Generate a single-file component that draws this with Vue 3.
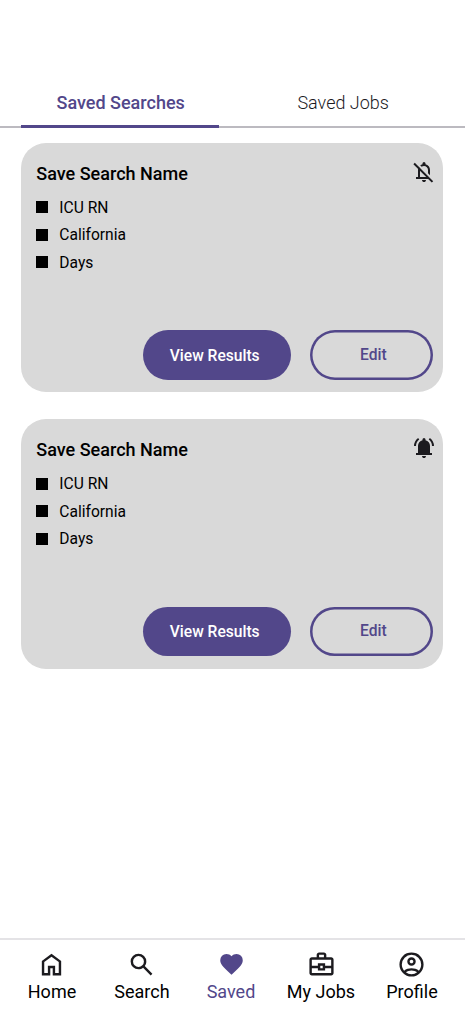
<script setup>
const searches = [
  { id: 1, name: 'Save Search Name', criteria: ['ICU RN', 'California', 'Days'], alerts: false },
  { id: 2, name: 'Save Search Name', criteria: ['ICU RN', 'California', 'Days'], alerts: true },
]

const bellOff =
  'M160-200v-80h80v-280q0-33 8.5-65t25.5-61l60 60q-7 16-10.5 32.5T320-560v280h248L56-792l56-56 736 736-56 56-146-144H160Zm560-154-80-80v-126q0-66-47-113t-113-47q-26 0-50 8t-44 24l-58-58q20-16 43-28t49-18v-28q0-25 17.5-42.5T480-880q25 0 42.5 17.5T540-820v28q80 20 130 84.5T720-560v206ZM480-80q-33 0-56.5-23.5T400-160h160q0 33-23.5 56.5T480-80Z'
const bellActive =
  'M160-200v-80h80v-280q0-83 50-147.5T420-792v-28q0-25 17.5-42.5T480-880t42.5 17.5T540-820v28q80 20 130 84.5T720-560v280h80v80H160Zm320 120q-33 0-56.5-23.5T400-160h160q0 33-23.5 56.5T480-80ZM80-560q0-100 44.5-183.5T244-882l47 64q-60 44-95.5 111T160-560H80Zm720 0q0-80-35.5-147T669-818l47-64q75 55 119.5 138.5T880-560h-80Z'

const nav = [
  { label: 'Home', cls: 'home', path: 'M240-200h120v-240h240v240h120v-360L480-740 240-560v360Zm-80 80v-480l320-240 320 240v480H520v-240h-80v240H160Z' },
  { label: 'Search', cls: 'search', path: 'M784-120 532-372q-30 24-69 38t-83 14q-109 0-184.5-75.5T120-580q0-109 75.5-184.5T380-840q109 0 184.5 75.5T640-580q0 44-14 83t-38 69l252 252-56 56ZM380-400q75 0 127.5-52.5T560-580q0-75-52.5-127.5T380-760q-75 0-127.5 52.5T200-580q0 75 52.5 127.5T380-400Z' },
  { label: 'Saved', cls: 'saved', path: 'm480-120-58-52q-101-91-167-157T150-447.5Q111-500 95.5-544T80-634q0-94 63-157t157-63q52 0 99 22t81 62q34-40 81-62t99-22q94 0 157 63t63 157q0 46-15.500 90T810-447.500Q771-395 705-329T538-172l-58 52Z' },
  { label: 'My Jobs', cls: 'jobs', path: 'M160-120q-33 0-56.5-23.5T80-200v-440q0-33 23.5-56.5T160-720h160v-80q0-33 23.5-56.5T400-880h160q33 0 56.5 23.5T640-800v80h160q33 0 56.5 23.5T880-640v440q0 33-23.5 56.5T800-120H160Zm240-600h160v-80H400v80Zm400 360H600v80H360v-80H160v160h640v-160Zm-360 0h80v-80h-80v80Zm-280-80h200v-80h240v80h200v-200H160v200Z' },
  { label: 'Profile', cls: 'profile', path: 'M234-276q51-39 114-61.5T480-360q69 0 132 22.5T726-276q35-41 54.5-93T800-480q0-133-93.5-226.5T480-800q-133 0-226.500 93.500T160-480q0 59 19.500 111t54.500 93Zm246-164q-59 0-99.500-40.500T340-580q0-59 40.500-99.500T480-720q59 0 99.500 40.500T620-580q0 59-40.500 99.500T480-440Zm0 360q-83 0-156-31.500T197-197q-54-54-85.500-127T80-480q0-83 31.500-156T197-763q54-54 127-85.500T480-880q83 0 156 31.500T763-763q54 54 85.500 127T880-480q0 83-31.500 156T763-197q-54 54-127 85.500T480-80Zm0-80q53 0 100-15.500t86-44.500q-39-29-86-44.500T480-280q-53 0-100 15.500T294-220q39 29 86 44.500T480-160Zm0-360q26 0 43-17t17-43q0-26-17-43t-43-17q-26 0-43 17t-17 43q0 26 17 43t43 17Z' },
]
</script>

<template>
  <div class="screen">
    <header class="tabs">
      <button class="tab active"><span>Saved Searches</span></button>
      <button class="tab"><span>Saved Jobs</span></button>
    </header>

    <main class="cards">
      <article v-for="s in searches" :key="s.id" class="card">
        <div class="head">
          <h2>{{ s.name }}</h2>
          <svg class="bell" viewBox="0 -960 960 960"><path :d="s.alerts ? bellActive : bellOff" /></svg>
        </div>
        <ul>
          <li v-for="c in s.criteria" :key="c"><i class="box"></i><span>{{ c }}</span></li>
        </ul>
        <div class="actions">
          <button class="btn filled"><span>View Results</span></button>
          <button class="btn outlined"><span>Edit</span></button>
        </div>
      </article>
    </main>

    <nav class="bottom">
      <a v-for="n in nav" :key="n.label" class="item" :class="n.cls">
        <svg viewBox="0 -960 960 960"><path :d="n.path" /></svg>
        <span>{{ n.label }}</span>
      </a>
    </nav>
  </div>
</template>

<style>
body {
  background: #fff;
}
</style>

<style scoped>
.screen {
  box-sizing: border-box;
  width: 465px;
  height: 1024px;
  padding-top: 78px;
  display: flex;
  flex-direction: column;
  background: #fff;
  color: #000;
  font-family: Roboto, sans-serif;
  overflow: hidden;
}
button {
  margin: 0;
  padding: 0;
  border: 0;
  background: none;
  font-family: inherit;
  color: inherit;
}
.tabs {
  display: flex;
  flex: none;
  box-sizing: border-box;
  height: 50px;
  padding-left: 21px;
  background: linear-gradient(#bcbac0, #bcbac0) 0 100% / 100% 2px no-repeat;
}
.tab {
  box-sizing: border-box;
  height: 50px;
  padding: 0 0 1px 2px;
  width: 247px;
  font-size: 18px;
  font-weight: 300;
  color: #1c1b1f;
}
.tab.active {
  width: 199.500px;
  font-weight: 500;
  color: #52478a;
  border-bottom: 3px solid #52478a;
  padding: 2px 0 0 1px;
}
.cards {
  flex: 1;
  padding: 14.500px 22px 0 20.500px;
  display: flex;
  flex-direction: column;
  gap: 26.300px;
}
.card {
  box-sizing: border-box;
  flex: none;
  height: 249.900px;
  padding: 17px 10.500px 12.800px 15.800px;
  border-radius: 25px;
  background: #d9d9d9;
  display: flex;
  flex-direction: column;
}
.head {
  display: flex;
  justify-content: space-between;
}
h2 {
  margin: 0;
  font-size: 18px;
  line-height: 27px;
  font-weight: 500;
}
.bell {
  width: 24px;
  height: 24px;
  margin-right: -3px;
  fill: #1c1b1f;
}
ul {
  list-style: none;
  margin: 7.200px 0 0;
  padding: 0;
}
li {
  display: flex;
  align-items: center;
  gap: 11px;
  height: 27.500px;
  font-size: 15.600px;
}
li span {
  padding-top: 0.800px;
}
.box {
  width: 12px;
  height: 12px;
  background: #000;
}
.actions {
  margin-top: auto;
  display: flex;
  justify-content: flex-end;
  gap: 19.500px;
}
.btn {
  box-sizing: border-box;
  height: 49.200px;
  border-radius: 25px;
  font-size: 15.600px;
  font-weight: 500;
}
.filled {
  width: 148px;
  padding: 1px 4px 0 0;
  background: #52478a;
  color: #fff;
}
.outlined {
  width: 122.300px;
  box-shadow: inset 0 0 0 2.500px #52478a;
  padding: 0 0 1px 4px;
  color: #52478a;
}
.bottom {
  flex: none;
  box-sizing: border-box;
  height: 86px;
  padding: 10px 7px 0;
  border-top: 2px solid #e4e3e6;
  display: grid;
  grid-template-columns: repeat(5, 90px);
}
.item {
  display: flex;
  flex-direction: column;
  align-items: center;
  font-size: 18px;
  line-height: 26px;
}
.item svg {
  width: 29px;
  height: 29px;
  margin-left: -1px;
  fill: #1c1b1f;
}
.item.saved {
  color: #52478a;
  margin-left: -2px;
}
.item.saved svg {
  width: 27px;
  margin-left: 1px;
  fill: #52478a;
}
.item.jobs {
  margin-left: -2px;
}
.item.jobs svg {
  margin-left: 0;
}
</style>
